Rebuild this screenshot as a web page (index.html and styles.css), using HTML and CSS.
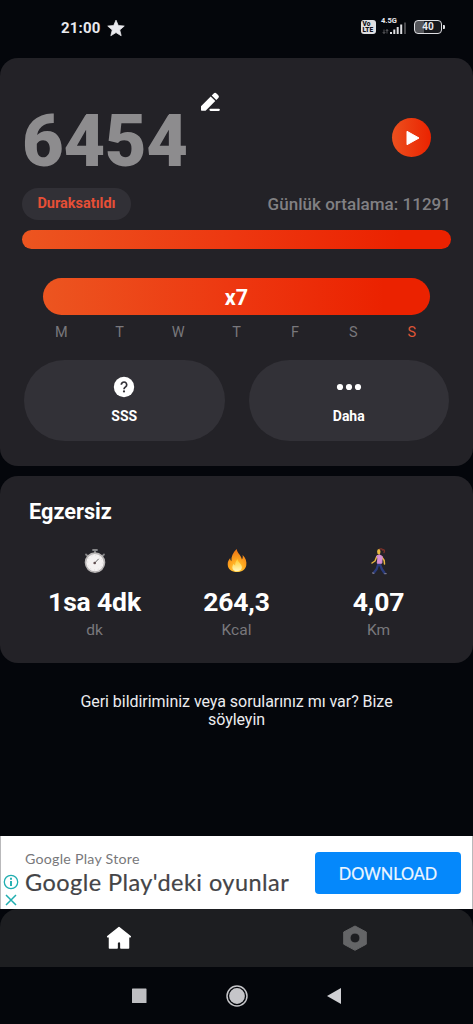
FILE: index.html
```html
<!DOCTYPE html>
<html lang="tr">
<head>
<meta charset="utf-8">
<meta name="viewport" content="width=device-width, initial-scale=1">
<title>Adım Sayar</title>
<link rel="stylesheet" href="styles.css">
</head>
<body>
<header class="status">
  <div class="status-left">
    <span class="clock">21:00</span>
    <svg width="18" height="18" viewBox="0 0 24 24"><path fill="#e9e9ee" stroke="#e9e9ee" stroke-width="1" stroke-linejoin="round" d="M12 1.500l3.100 7.200 7.900.7-6 5.200 1.900 7.700L12 18.100l-6.900 4.200L7 14.600 1 9.400l7.900-.7z"/></svg>
  </div>
  <div class="status-right">
    <div class="volte"><span>Vo</span><span>LTE</span></div>
    <div class="signal">
      <span class="network">4.5G</span>
      <svg width="26" height="13" viewBox="0 0 26 13">
        <path d="M3 7.500v4M1.700 10L3 11.500 4.300 10M6 11.500v-4M4.800 9L6 7.500 7.200 9" stroke="#68686c" fill="none" stroke-width=".8"/>
        <path d="M9 10h2v2H9zM12.300 7.500h2V12h-2zM15.700 5h2v7h-2zM19.200 2.500h2V12h-2z" fill="#dedee2"/>
        <path d="M23 .5h2V12h-2z" fill="#48484c"/>
      </svg>
    </div>
    <div class="battery"><span>40</span></div>
  </div>
</header>

<main>
  <section class="card summary">
    <div class="steps-row">
      <span class="steps">6454</span>
      <svg class="edit" width="22" height="22" viewBox="0 0 22 22"><path fill="#fff" d="M2 15.200L11.700 5.500l4.600 4.600L6.600 19.800H2.700a.7.700 0 0 1-.7-.7zM12.700 4.500l2-2a2 2 0 0 1 2.800 0l1.800 1.800a2 2 0 0 1 0 2.800l-2 2z"/><path d="M11.500 18.800h8.300" stroke="#fff" stroke-width="2.200" stroke-linecap="round"/></svg>
      <button class="play" aria-label="Başlat"><svg width="14" height="16" viewBox="0 0 14 16"><path d="M1 1.300v13.400L13 8z" fill="#fff" stroke="#fff" stroke-width="1" stroke-linejoin="round"/></svg></button>
    </div>
    <div class="state-row">
      <span class="paused">Duraksatıldı</span>
      <span class="average">Günlük ortalama: 11291</span>
    </div>
    <div class="progress"></div>
    <div class="streak">x7</div>
    <div class="days"><span>M</span><span>T</span><span>W</span><span>T</span><span>F</span><span>S</span><span class="today">S</span></div>
    <div class="actions">
      <button class="action">
        <svg width="22" height="22" viewBox="0 0 22 22"><circle cx="11" cy="11" r="10.200" fill="#fff"/><path d="M8.300 8.800a2.700 2.700 0 1 1 4.300 2.100c-1 .8-1.600 1.100-1.600 2.300" fill="none" stroke="#323137" stroke-width="1.700"/><circle cx="11" cy="15.400" r="1.100" fill="#323137"/></svg>
        <span>SSS</span>
      </button>
      <button class="action">
        <svg width="26" height="22" viewBox="0 0 26 22" fill="#fff"><circle cx="4" cy="11" r="3.100"/><circle cx="13" cy="11" r="3.100"/><circle cx="22" cy="11" r="3.100"/></svg>
        <span>Daha</span>
      </button>
    </div>
  </section>

  <section class="card exercise">
    <h2>Egzersiz</h2>
    <div class="stats">
      <div class="stat">
        <svg width="26" height="28" viewBox="0 0 26 28">
          <path d="M11 3h4M13 3v3M4 7.500l2 2M22 7.500l-2 2" stroke="#858587" stroke-width="1.800" stroke-linecap="round"/>
          <circle cx="13" cy="15.600" r="9.500" fill="#f4f1f1" stroke="#b8b5b5" stroke-width="1.600"/>
          <circle cx="13" cy="15.600" r="7.400" fill="none" stroke="#d6d2d2" stroke-width=".8" stroke-dasharray="1 2.870"/>
          <path d="M12.500 16.200l4.200-4.400" stroke="#666" stroke-width="1"/><circle cx="12.700" cy="16" r="1.300" fill="#604e50"/>
        </svg>
        <strong>1sa 4dk</strong><span>dk</span>
      </div>
      <div class="stat">
        <svg width="26" height="28" viewBox="0 0 26 28">
          <defs><radialGradient id="flame" cx=".5" cy=".9" r=".85"><stop offset="0" stop-color="#ffd449"/><stop offset=".45" stop-color="#ffab20"/><stop offset="1" stop-color="#f07615"/></radialGradient><linearGradient id="core" x1="0" y1="0" x2="0" y2="1"><stop offset="0" stop-color="#ffca28"/><stop offset="1" stop-color="#fff6bd"/></linearGradient></defs>
          <path fill="url(#flame)" d="M12.600 2c.8 4.500 4.700 6.300 5.300 10.400.8-.8 1.100-2.500.7-4.400 3 3 4.300 6.600 3.700 10.200-.7 4.200-4.200 6.800-9 6.800-5.600 0-9.500-3-9.600-7.600-.1-2.500 1-4.600 2.500-6.400 0 1.500.3 2.400 1.200 3.200C7 9.600 9 5.400 12.600 2z"/>
          <path fill="url(#core)" d="M13.500 12c.2 3 3.800 4.400 4.300 7.800.3 2.700-1.800 4.400-4.700 4.400-3 0-5-1.800-4.700-4.500.1-1.200.7-2.200 1.500-3 .2 1 .7 1.500 1.300 1.800-.1-2.500.8-4.800 2.300-6.500z"/>
        </svg>
        <strong>264,3</strong><span>Kcal</span>
      </div>
      <div class="stat">
        <svg width="26" height="28" viewBox="0 0 26 28" fill="none" stroke-linecap="round" stroke-linejoin="round">
          <path d="M13.500 2.200c1.600-.7 2.800-.2 3 .8 1.700-.8 2.500.8 1.500 2.600" stroke="#7d3029" stroke-width="1.300"/>
          <path d="M10.800 9.500L9 14l-3 2M15.800 9.800l2.400 3.700.3 3.500" stroke="#e6b63f" stroke-width="1.500"/>
          <path d="M13.800 17l2 5 2.700 4M12.300 17l-1.600 5-2.700 3.500" stroke="#2b3c7c" stroke-width="2.300"/>
          <path d="M11 8.800l2.500-1 2.700 1.600-.4 6.800h-4.600l.6-4z" fill="#d890d3" stroke="#d890d3" stroke-width="1"/>
          <ellipse cx="12.800" cy="4.700" rx="1.700" ry="2.700" fill="#e6b63f"/>
          <path d="M7.800 26.400l-1.300-.5M18.700 26.600h1.500" stroke="#77758a" stroke-width="1.200"/>
        </svg>
        <strong>4,07</strong><span>Km</span>
      </div>
    </div>
  </section>
  <p class="feedback">Geri bildiriminiz veya sorularınız mı var? Bize söyleyin</p>
</main>

<aside class="ad">
  <div class="ad-marks">
    <svg width="16" height="16" viewBox="0 0 16 16" fill="none" stroke="#20aeb0" stroke-width="1.300"><circle cx="8" cy="8" r="6.700"/><path d="M8 7v5M8 3.800v1.900" stroke-width="1.900"/></svg>
    <svg width="16" height="14" viewBox="0 0 16 14" fill="none" stroke="#20aeb0" stroke-width="1.500"><path d="M3 2l10 10M13 2L3 12"/></svg>
  </div>
  <div class="ad-copy"><span class="ad-source">Google Play Store</span><span class="ad-title">Google Play'deki oyunlar</span></div>
  <button class="download">DOWNLOAD</button>
</aside>
<div class="tabs-back">
  <nav class="tabs">
    <svg width="28" height="28" viewBox="0 0 28 28"><path fill="#fff" stroke="#fff" stroke-linejoin="round" stroke-width="1.500" d="M15 3.500L3.700 12.700h1.800v11.300h7.600v-4.500a1.900 1.900 0 0 1 3.800 0V24h7.600V12.700h1.800z"/></svg>
    <svg width="28" height="28" viewBox="0 0 28 28"><path fill="#646567" fill-rule="evenodd" stroke="#646567" stroke-linejoin="round" d="M14 2l11.300 6v12.200L14 26.300 2.700 20.200V8zM14 9a5 5 0 1 0 0 10 5 5 0 1 0 0-10z"/></svg>
  </nav>
</div>
<footer class="system">
  <svg width="24" height="24" viewBox="0 0 24 24"><rect x="4" y="4.500" width="14.500" height="14.500" rx=".6" fill="#bebec2"/></svg>
  <svg width="24" height="24" viewBox="0 0 24 24"><circle cx="12" cy="12" r="10" fill="none" stroke="#c5c5c9" stroke-width="1.500"/><circle cx="12" cy="12" r="7.900" fill="#c5c5c9"/></svg>
  <svg width="24" height="24" viewBox="0 0 24 24"><path fill="#d0d0d4" d="M19 4v16L5 12z"/></svg>
</footer>
</body>
</html>
```
FILE: styles.css
```css
* { box-sizing: border-box; }
body {
  margin: 0;
  width: 473px;
  height: 1024px;
  display: flex;
  flex-direction: column;
  overflow: hidden;
  background: #04060b;
  color: #fff;
  font-family: Roboto, sans-serif;
}
button { border: 0; padding: 0; color: inherit; font-family: inherit; }
svg { display: block; flex: none; }

.status {
  height: 58px;
  padding: 0 31px 4px 61px;
  display: flex;
  justify-content: space-between;
  align-items: center;
  color: #e9e9ee;
}
.status-left, .status-right { display: flex; align-items: center; }
.status-left { gap: 6px; padding-top: 1px; }
.clock { font-size: 15px; font-weight: 700; letter-spacing: .2px; line-height: 18px; }
.volte {
  width: 15px; height: 14px;
  border-radius: 3px;
  background: #dedee2;
  color: #101116;
  display: flex; flex-direction: column;
  padding: 1px 1px 0 1.5px;
  font-size: 6.500px; line-height: 6px; font-weight: 900;
}
.signal { width: 26px; height: 17px; margin: 0 7px 3px 5px; display: flex; flex-direction: column; }
.network { height: 5px; font-size: 7.500px; line-height: 8px; font-weight: 700; white-space: nowrap; }
.battery {
  width: 28px; height: 14px;
  border: 1.5px solid #dedee2;
  border-radius: 4px;
  position: relative;
  background: linear-gradient(90deg, #55565b 35%, #16171c 35%);
  font-size: 10px; line-height: 12px; font-weight: 700;
  text-align: center;
}
.battery::after {
  content: "";
  position: absolute; right: -4px; top: 3.5px;
  width: 2px; height: 4px;
  background: #dedee2;
  border-radius: 0 1px 1px 0;
}

.card { background: #232227; border-radius: 18px; }
.summary { height: 408px; padding: 0 22px; display: flex; flex-direction: column; }
.steps-row { height: 129px; display: flex; align-items: flex-start; }
.steps { width: 168px; margin-top: 47px; font-size: 72px; line-height: 74px; font-weight: 900; letter-spacing: -.3px; color: #8d8c8e; }
.edit { margin: 33px 0 0 9px; }
.play {
  width: 39px; height: 39px;
  margin: 60px 20px 0 auto;
  border-radius: 50%;
  background: linear-gradient(90deg, #ec501e, #eb2300);
  display: flex; align-items: center; justify-content: center;
}
.play svg { margin-left: 2px; }
.state-row { height: 33px; display: flex; justify-content: space-between; align-items: center; }
.paused {
  width: 109px; height: 32px;
  border-radius: 16px;
  background: #313036;
  color: #e64f36;
  font-size: 14.500px; line-height: 31px; font-weight: 700;
  text-align: center;
}
.average { font-size: 17px; font-weight: 500; letter-spacing: .03px; color: #818083; padding-top: 1px; }
.progress { height: 19px; margin-top: 10px; border-radius: 10px; }
.progress, .streak { flex: none; background: linear-gradient(90deg, #ec5520, #ed3710 50%, #eb2200 88%); }
.streak {
  height: 37px; margin: 28.500px 21px 0;
  border-radius: 19px;
  font-size: 21.500px; line-height: 39px; font-weight: 700;
  text-align: center;
}
.days {
  height: 20px; margin: 7.500px 10px 0;
  display: grid; grid-template-columns: repeat(7, 1fr);
  font-size: 14.500px; line-height: 21px;
  text-align: center;
  color: #79787c;
}
.today { color: #df5536; }
.actions { display: grid; grid-template-columns: 1fr 1fr; gap: 24px; margin: 17.500px 2px 0; }
.action {
  height: 81px;
  border-radius: 41px;
  background: #323137;
  display: flex; flex-direction: column; align-items: center;
  padding-top: 16px; gap: 9.500px;
  font-size: 14px; line-height: 18px; font-weight: 700;
}

.exercise { height: 187px; margin-top: 10px; padding-top: 22.500px; }
.exercise h2 { margin: 0 0 0 29px; font-size: 21.700px; line-height: 26px; font-weight: 700; }
.stats { display: grid; grid-template-columns: repeat(3, 142px); margin: 22.500px 0 0 23.500px; }
.stat { display: flex; flex-direction: column; align-items: center; }
.stat strong { margin-top: 11px; font-size: 26.500px; line-height: 32px; font-weight: 700; letter-spacing: -.15px; }
.stat span { margin-top: 2px; font-size: 15.500px; line-height: 20px; color: #79787c; }
.feedback {
  width: 330px;
  margin: 30px auto 0;
  font-size: 16px; line-height: 18px; letter-spacing: -.04px;
  color: #ececef;
  text-align: center;
}

.ad {
  height: 73px; margin-top: auto; flex: none;
  background: #fff;
  border: 1px solid #b9b9bb;
  border-width: 0 1px;
  display: flex;
  color: #444447;
}
.ad-marks { width: 24px; padding: 37.500px 0 0 2px; }
.ad-marks svg + svg { margin-top: 3px; }
.ad-copy { display: flex; flex-direction: column; padding-top: 12.500px; white-space: nowrap; font-family: Lato, sans-serif; }
.ad-source { font-size: 14.200px; line-height: 20px; letter-spacing: .26px; color: #78787b; }
.ad-title { font-size: 23.500px; line-height: 27px; letter-spacing: .45px; -webkit-text-stroke: .2px #444447; }
.download {
  width: 146px; height: 42px;
  margin: 16px 11px 0 auto;
  border-radius: 4px;
  background: #0588fb;
  color: #edf6ff;
  font-family: Lato, sans-serif;
  font-size: 16.300px; line-height: 41px;
  -webkit-text-stroke: .2px #edf6ff;
}
.tabs-back { flex: none; height: 58px; background: #04060b; }
.tabs {
  height: 58px;
  border-radius: 18px 18px 0 0;
  background: #1d1e21;
  display: grid; grid-template-columns: 1fr 1fr;
  justify-items: center; align-items: center;
}
.system {
  flex: none; height: 57px;
  padding: 0 127.500px;
  display: flex; justify-content: space-between; align-items: center;
}
```
